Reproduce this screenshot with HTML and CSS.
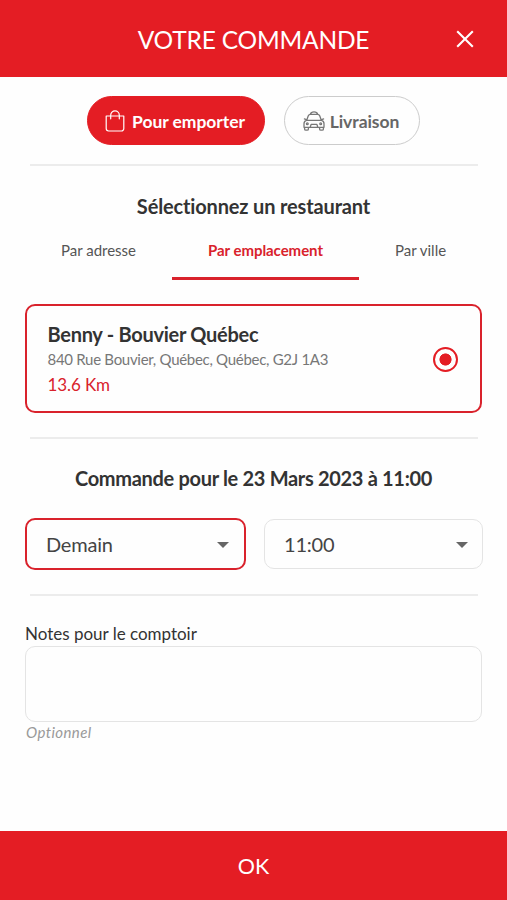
FILE: index.html
```html
<!DOCTYPE html>
<html lang="fr">
<head>
<meta charset="utf-8">
<meta name="viewport" content="width=device-width, initial-scale=1">
<title>Votre commande</title>
<link rel="stylesheet" href="styles.css">
</head>
<body>
<div class="app">
  <header class="header">
    <h1 class="title">VOTRE COMMANDE</h1>
    <button class="close" aria-label="Fermer">
      <svg viewBox="0 0 18 18" width="18" height="18"><path d="M1.2 1.2 16.8 16.8M16.8 1.2 1.2 16.8" fill="none" stroke="currentColor" stroke-width="2.1"/></svg>
    </button>
  </header>
  <main class="content">
    <div class="modes">
      <button class="mode mode-active">
        <svg class="bag" viewBox="0 0 20 22" width="20" height="22" fill="none" stroke="currentColor" stroke-width="1.2" stroke-linejoin="round" stroke-linecap="round"><path d="M1.2 6h17.6v12.6a2.4 2.4 0 0 1-2.4 2.4H3.6a2.4 2.4 0 0 1-2.4-2.4zM5.7 8.8V5.2a4.3 4.3 0 0 1 8.6 0v3.6"/></svg>
        <span>Pour emporter</span>
      </button>
      <button class="mode">
        <svg class="taxi" viewBox="0 0 22 20" width="22" height="20" fill="none" stroke="currentColor" stroke-width="1.3" stroke-linejoin="round" stroke-linecap="round"><path d="M7.3 3.2Q8 .9 11 .9t3.7 2.3M3.6 9.4l1.7-4.6Q5.9 3.3 7.4 3.3h7.2q1.5 0 2.1 1.5l1.7 4.6M3.4 9.4h15.2q2.4.8 2.4 3.3v3.6H1v-3.6q0-2.5 2.4-3.3zM1.6 16.4v1.5q0 1.3 1.3 1.3h1.2q1.3 0 1.3-1.3v-1.5M16.6 16.4v1.5q0 1.3 1.3 1.3h1.2q1.3 0 1.3-1.3v-1.5M3.3 8.6l-1.9-.7M18.7 8.6l1.9-.7M7.2 16.2l.9-2.8h5.8l.9 2.8"/><circle cx="4.3" cy="12.8" r=".9"/><circle cx="17.7" cy="12.8" r=".9"/></svg>
        <span>Livraison</span>
      </button>
    </div>
    <hr class="rule">
    <h2 class="heading heading-restaurant">Sélectionnez un restaurant</h2>
    <nav class="tabs">
      <a class="tab">Par adresse</a>
      <a class="tab tab-active">Par emplacement</a>
      <a class="tab">Par ville</a>
    </nav>
    <section class="card">
      <div>
        <h3 class="name">Benny - Bouvier Québec</h3>
        <p class="address">840 Rue Bouvier, Québec, Québec, G2J 1A3</p>
        <p class="distance">13.6 Km</p>
      </div>
      <span class="radio"></span>
    </section>
    <hr class="rule">
    <h2 class="heading heading-time">Commande pour le 23 Mars 2023 à 11:00</h2>
    <div class="selects">
      <div class="select select-active"><span>Demain</span><i class="caret"></i></div>
      <div class="select"><span>11:00</span><i class="caret"></i></div>
    </div>
    <hr class="rule">
    <label class="label" for="notes">Notes pour le comptoir</label>
    <textarea class="notes" id="notes"></textarea>
    <p class="hint">Optionnel</p>
  </main>
  <button class="ok">OK</button>
</div>
</body>
</html>
```

FILE: styles.css
```css
* { box-sizing: border-box; margin: 0; padding: 0; }
body { font-family: Lato, "Liberation Sans", sans-serif; color: #333; background: #fefefe; }
button { font: inherit; border: 0; background: none; }
.app { height: 900px; display: flex; flex-direction: column; overflow: hidden; }
.header { height: 76.5px; background: #e41d24; color: #fff; display: grid; grid-template-columns: 50px 1fr 50px; align-items: center; padding: 2px 17px 0; }
.title { grid-column: 2; text-align: center; font-size: 24.5px; font-weight: 400; line-height: 30px; letter-spacing: -0.2px; padding-top: 2px; }
.close { display: flex; justify-content: center; color: #fff; }
.content { flex: 1; padding: 19.5px 25px 0; }
.modes { display: flex; justify-content: center; gap: 19px; height: 49px; }
.mode { display: flex; align-items: center; justify-content: center; gap: 7px; width: 136px; border: 1.5px solid #ccc; border-radius: 25px; color: #666; font-size: 17.5px; font-weight: 700; letter-spacing: -0.05px; white-space: nowrap; padding-right: 2px; }
.mode span { padding-top: 2px; }
.mode-active { width: 178px; background: #e41d24; border-color: #e41d24; color: #fff; }
.taxi { margin-right: -2px; color: #777; }
.rule { border: 0; height: 2px; background: #ececec; margin: 19px 4px 0 5px; }
.heading { text-align: center; font-size: 20px; line-height: 24px; font-weight: 700; }
.heading-restaurant { margin-top: 28px; letter-spacing: -0.15px; }
.tabs { display: grid; grid-template-columns: 147px 187px 123px; height: 61px; margin-top: 1px; font-size: 15px; color: #555; }
.tab { text-align: center; line-height: 18px; padding-top: 22px; border-bottom: 3px solid transparent; }
.tab-active { color: #d9222c; font-weight: 700; border-color: #d9222c; letter-spacing: -0.05px; }
.card { margin-top: 24px; height: 109px; border: 2.5px solid #d9222c; border-radius: 10px; display: flex; justify-content: space-between; align-items: center; padding: 1px 22px 0 20.5px; }
.name { font-size: 20px; line-height: 25px; font-weight: 700; letter-spacing: -0.28px; padding-top: 2px; }
.address { font-size: 15px; line-height: 25px; color: #777; letter-spacing: -0.29px; }
.distance { font-size: 17px; line-height: 26px; color: #d9222c; letter-spacing: -0.1px; }
.radio { width: 25px; height: 25px; border: 2.5px solid #e41d24; border-radius: 50%; background: radial-gradient(circle, #e41d24 5.7px, transparent 6.4px); }
.card + .rule { margin-top: 24px; }
.heading-time { margin-top: 27px; letter-spacing: -0.31px; }
.selects { display: grid; grid-template-columns: 221px 219px; gap: 17.5px; align-items: center; margin-top: 28px; height: 52px; }
.select { height: 50px; border: 1.5px solid #e4e4e4; border-radius: 10px; display: flex; align-items: center; justify-content: space-between; padding: 0 14px 0 19.5px; font-size: 20px; letter-spacing: -0.2px; color: #444; }
.select-active { height: 52px; border: 2.5px solid #d9222c; padding: 0 15px 0 19px; }
.caret { margin-top: 2px; border: 6px solid transparent; border-top-color: #666; border-bottom: 0; }
.selects + .rule { margin-top: 24px; }
.label { display: block; margin-top: 27px; font-size: 17px; line-height: 22px; letter-spacing: -0.01px; }
.notes { display: block; margin-top: 1px; width: 457px; height: 76px; border: 1.5px solid #e4e4e4; border-radius: 10px; background: #fefefe; resize: none; }
.hint { font-size: 15px; line-height: 21px; font-style: italic; color: #999; padding-left: 1px; letter-spacing: 0.4px; }
.ok { height: 69px; background: #e41d24; color: #fff; font-size: 21.5px; }
```
